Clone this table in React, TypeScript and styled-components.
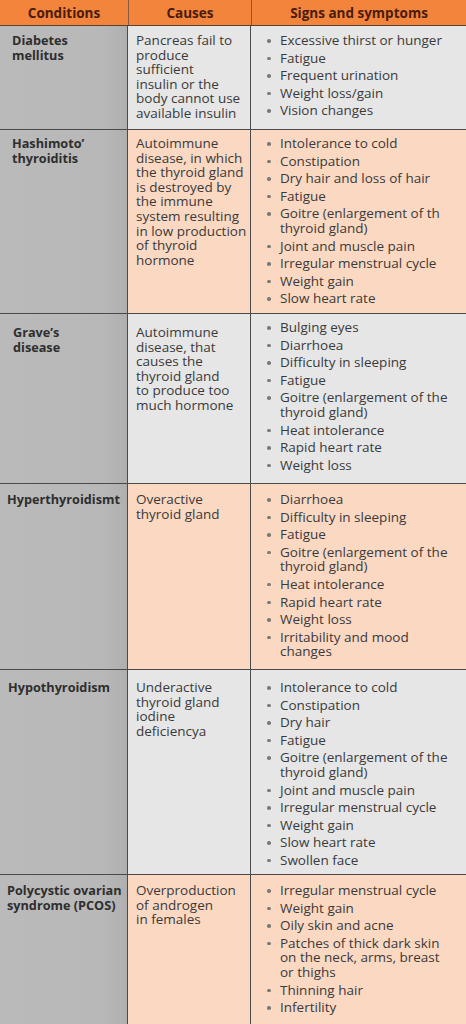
import styled, { createGlobalStyle } from 'styled-components';

const GlobalStyle = createGlobalStyle`
  html, body {
    margin: 0;
    padding: 0;
    background: #e6e6e6;
  }
  * {
    box-sizing: border-box;
  }
`;

const StyledTable = styled.div`
  width: 466px;
  display: flex;
  flex-direction: column;
  font-family: 'Open Sans', 'Liberation Sans', sans-serif;
  font-size: 13.5px;
  color: #3a3a3a;
`;

const StyledHeader = styled.div`
  display: grid;
  grid-template-columns: 128px 123px 1fr;
  height: 26px;
  background: #f2843c;
  border-bottom: 1.5px solid #5a4034;
`;

const StyledHeadCell = styled.div`
  display: flex;
  align-items: center;
  justify-content: center;
  font-weight: 700;
  color: #4a1c0c;
  font-size: 13.5px;
  & + & {
    border-left: 1px solid #8a5a40;
  }
`;

type RowProps = {
  $h: number;
  $tone: 'light' | 'peach';
};

const StyledRow = styled.div<RowProps>`
  display: grid;
  grid-template-columns: 128px 123px 1fr;
  height: ${({ $h }) => $h}px;
  background: ${({ $tone }) => ($tone === 'peach' ? '#fad8c2' : '#e6e6e6')};
  border-bottom: 1.5px solid #4a4a4a;
  &:last-child {
    border-bottom: none;
  }
`;

type CellProps = {
  $top: number;
  $left?: number;
};

const StyledCondition = styled.div<CellProps>`
  background: linear-gradient(to right, #bababa 0%, #b8b8b8 82%, #afafaf 100%);
  padding: ${({ $top, $left }) => `${$top}px 0 0 ${$left ?? 12}px`};
  font-size: 12.7px;
  font-weight: 700;
  line-height: 15px;
  white-space: nowrap;
  color: #2e2e2e;
  border-right: 1.5px solid #4a4a4a;
`;

const StyledCause = styled.div<CellProps>`
  padding: ${({ $top }) => `${$top}px 0 0 8px`};
  line-height: 14.6px;
  white-space: nowrap;
  border-right: 1.5px solid #4a4a4a;
`;

const StyledList = styled.ul<CellProps>`
  list-style: none;
  margin: 0;
  padding: ${({ $top }) => `${$top}px 4px 0 29px`};
  display: flex;
  flex-direction: column;
  gap: 3px;
  white-space: nowrap;
`;

const StyledItem = styled.li`
  position: relative;
  line-height: 14.6px;
  &::before {
    content: '';
    position: absolute;
    left: -13px;
    top: 6px;
    width: 3.5px;
    height: 3.5px;
    border-radius: 50%;
    background: #7a7a7a;
  }
`;

type Condition = {
  name: string[];
  cause: string[];
  signs: string[];
  h: number;
  tone: 'light' | 'peach';
  top: number;
  nameTop?: number;
  nameLeft?: number;
};

const conditions: Condition[] = [
  {
    name: ['Diabetes', 'mellitus'],
    cause: ['Pancreas fail to', 'produce', 'sufficient', 'insulin or the', 'body cannot use', 'available insulin'],
    signs: ['Excessive thirst or hunger', 'Fatigue', 'Frequent urination', 'Weight loss/gain', 'Vision changes'],
    h: 104,
    tone: 'light',
    top: 7,
  },
  {
    name: ['Hashimoto’', 'thyroiditis'],
    cause: [
      'Autoimmune',
      'disease, in which',
      'the thyroid gland',
      'is destroyed by',
      'the immune',
      'system resulting',
      'in low production',
      'of thyroid',
      'hormone',
    ],
    signs: [
      'Intolerance to cold',
      'Constipation',
      'Dry hair and loss of hair',
      'Fatigue',
      'Goitre (enlargement of th\n thyroid gland)',
      'Joint and muscle pain',
      'Irregular menstrual cycle',
      'Weight gain',
      'Slow heart rate',
    ],
    h: 184,
    tone: 'peach',
    top: 6,
  },
  {
    name: ['Grave’s', 'disease'],
    cause: ['Autoimmune', 'disease, that', 'causes the', 'thyroid gland', 'to produce too', 'much hormone'],
    signs: [
      'Bulging eyes',
      'Diarrhoea',
      'Difficulty in sleeping',
      'Fatigue',
      'Goitre (enlargement of the\nthyroid gland)',
      'Heat intolerance',
      'Rapid heart rate',
      'Weight loss',
    ],
    h: 170,
    tone: 'light',
    top: 6,
    nameTop: 11,
    nameLeft: 13,
  },
  {
    name: ['Hyperthyroidismt'],
    cause: ['Overactive', 'thyroid gland'],
    signs: [
      'Diarrhoea',
      'Difficulty in sleeping',
      'Fatigue',
      'Goitre (enlargement of the\nthyroid gland)',
      'Heat intolerance',
      'Rapid heart rate',
      'Weight loss',
      'Irritability and mood\nchanges',
    ],
    h: 186,
    tone: 'peach',
    top: 8,
    nameLeft: 7,
  },
  {
    name: ['Hypothyroidism'],
    cause: ['Underactive', 'thyroid gland', 'iodine', 'deficiencya'],
    signs: [
      'Intolerance to cold',
      'Constipation',
      'Dry hair',
      'Fatigue',
      'Goitre (enlargement of the\nthyroid gland)',
      'Joint and muscle pain',
      'Irregular menstrual cycle',
      'Weight gain',
      'Slow heart rate',
      'Swollen face',
    ],
    h: 205,
    tone: 'light',
    top: 10,
    nameLeft: 8,
  },
  {
    name: ['Polycystic ovarian', 'syndrome (PCOS)'],
    cause: ['Overproduction', 'of androgen', 'in females'],
    signs: [
      'Irregular menstrual cycle',
      'Weight gain',
      'Oily skin and acne',
      'Patches of thick dark skin\non the neck, arms, breast\nor thighs',
      'Thinning hair',
      'Infertility',
    ],
    h: 150,
    tone: 'peach',
    top: 8,
    nameLeft: 7,
  },
];

const Lines = ({ lines }: { lines: string[] }) => (
  <>
    {lines.map((line, i) => (
      <div key={`${line}-${i}`}>{line}</div>
    ))}
  </>
);

export default function App() {
  return (
    <>
      <GlobalStyle />
      <StyledTable>
        <StyledHeader>
          <StyledHeadCell>Conditions</StyledHeadCell>
          <StyledHeadCell>Causes</StyledHeadCell>
          <StyledHeadCell>Signs and symptoms</StyledHeadCell>
        </StyledHeader>
        {conditions.map((c) => (
          <StyledRow key={c.name.join(' ')} $h={c.h} $tone={c.tone}>
            <StyledCondition $top={c.nameTop ?? c.top} $left={c.nameLeft}>
              <Lines lines={c.name} />
            </StyledCondition>
            <StyledCause $top={c.nameTop ?? c.top}>
              <Lines lines={c.cause} />
            </StyledCause>
            <StyledList $top={c.top}>
              {c.signs.map((s) => (
                <StyledItem key={s}>
                  <Lines lines={s.split('\n')} />
                </StyledItem>
              ))}
            </StyledList>
          </StyledRow>
        ))}
      </StyledTable>
    </>
  );
}
